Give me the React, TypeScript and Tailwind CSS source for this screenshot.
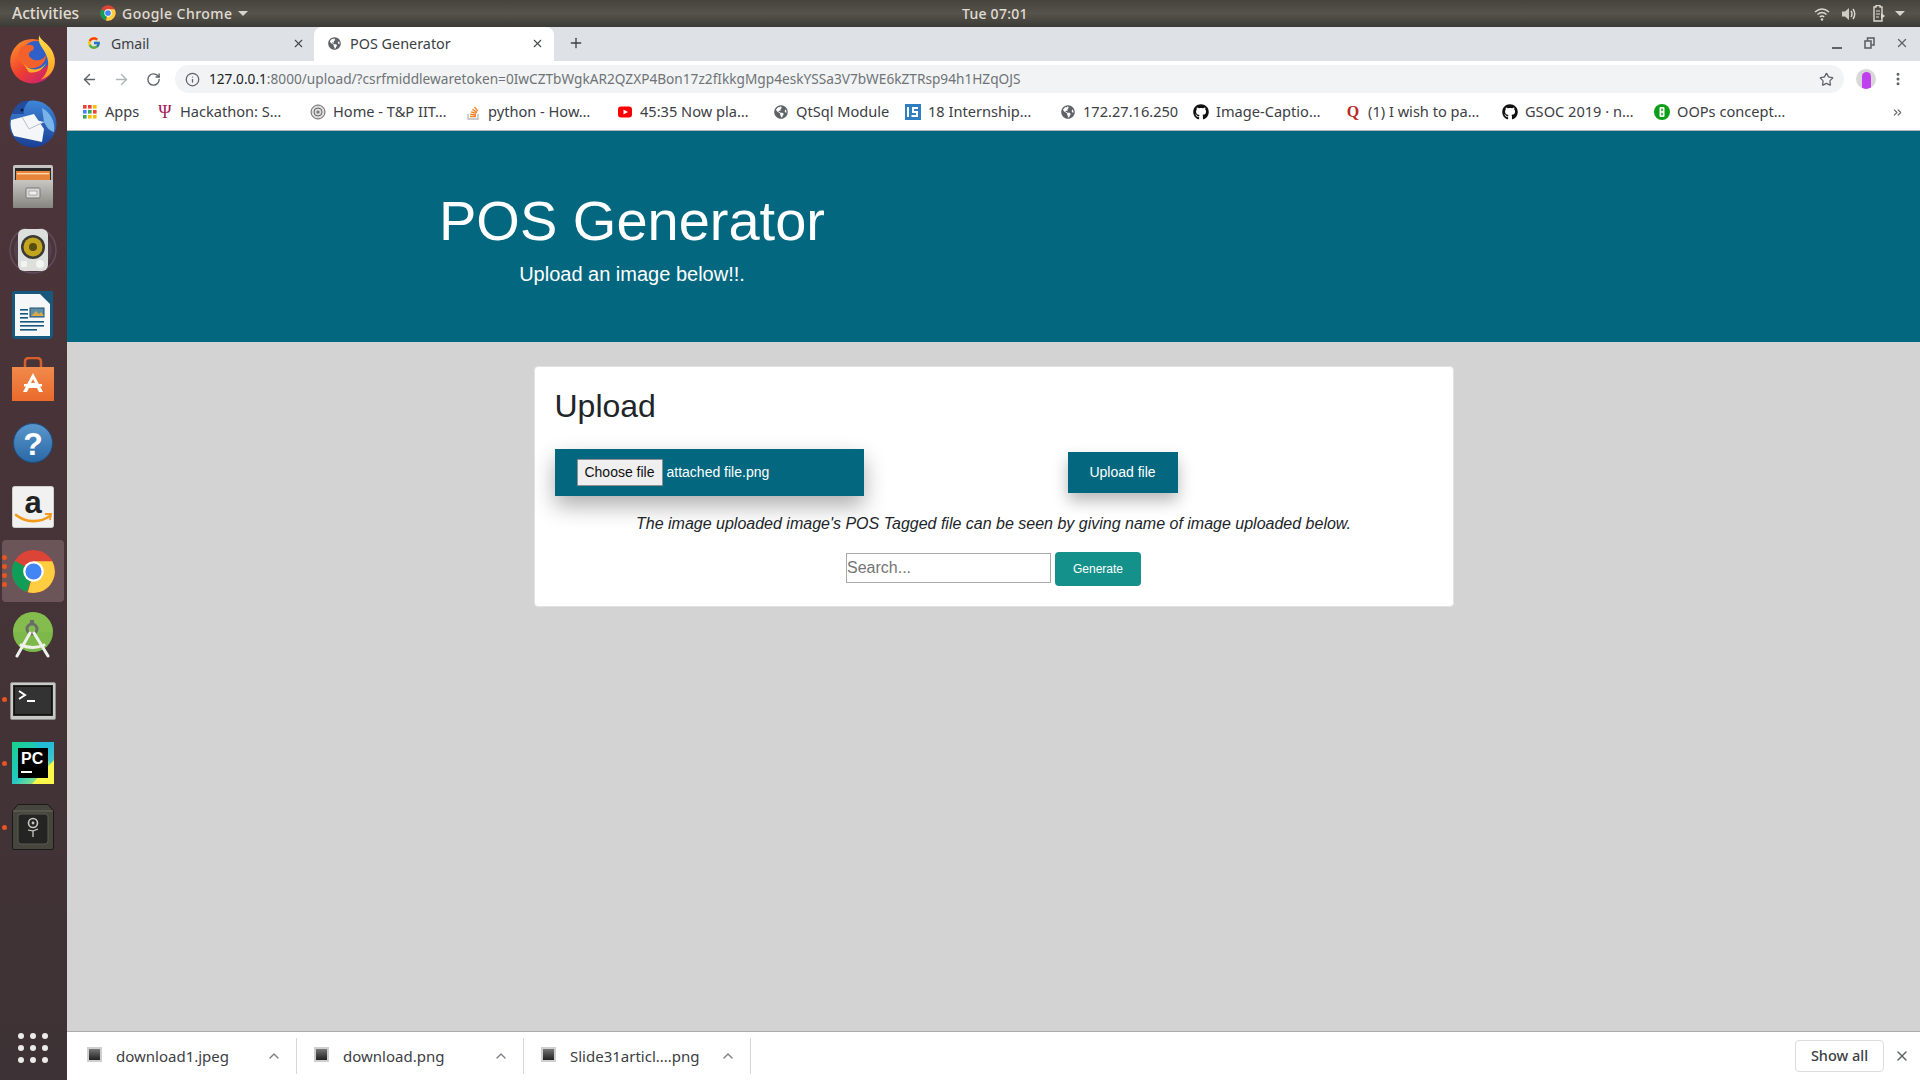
import React from "react";
import { ArrowLeft, ArrowRight, RotateCw, Info, Star, X, Plus, MoreVertical, ChevronUp, ChevronsRight } from "lucide-react";
import { FaGithub, FaGlobeAmericas } from "react-icons/fa";
import { FcGoogle } from "react-icons/fc";

const Globe = () => <FaGlobeAmericas className="w-[14px] h-[14px] text-[#5f6368]" />;
const Git = () => <FaGithub className="w-[16px] h-[16px] text-[#111]" />;

function ChromeLogo({ size }: { size: number }) {
  return (
    <svg width={size} height={size} viewBox="0 0 48 48">
      <circle cx="24" cy="24" r="23" fill="#db4437" />
      <path d="M24 24 L4.1 12.5 A23 23 0 0 0 17 46 Z" fill="#0f9d58" />
      <path d="M24 13 L44 13 A23 23 0 0 1 18 46.2 L24 24 Z" fill="#ffcd40" />
      <circle cx="24" cy="24" r="11" fill="#fff" />
      <circle cx="24" cy="24" r="8.6" fill="#4285f4" />
    </svg>
  );
}

const Firefox = () => (
  <svg width="50" height="50" viewBox="0 0 46 46">
    <defs>
      <linearGradient id="ffa" x1="0" y1="0" x2="0.8" y2="1"><stop offset="0" stopColor="#ff9a2a" /><stop offset="0.55" stopColor="#f0402e" /><stop offset="1" stopColor="#c91f72" /></linearGradient>
      <linearGradient id="ffb" x1="0" y1="0" x2="0" y2="1"><stop offset="0" stopColor="#ffe24a" /><stop offset="1" stopColor="#ff9a1f" /></linearGradient>
    </defs>
    <circle cx="22.5" cy="25" r="20.5" fill="url(#ffa)" />
    <circle cx="26" cy="20" r="13.5" fill="#2f5fc8" />
    <path d="M12 12 C20 8 26 10 23 15 C19 16 18 20 21 22 C25 26 33 24 35 19 C35 28 26 33 19 31 C11 29 7 20 12 12Z" fill="#f4602a" />
    <path d="M29 1 C29 7 41 9 43 23 C44 33 38 40 30 42 C37 36 39 27 35 19 C33 13 26 9 29 1Z" fill="url(#ffb)" />
    <path d="M14 27 C20 35 30 34 35 27 C32 33 26 37 19 35 Z" fill="#ffb02a" />
  </svg>
);

const Thunderbird = () => (
  <svg width="50" height="50" viewBox="0 0 50 50">
    <defs>
      <linearGradient id="tb" x1="0" y1="0" x2="0" y2="1"><stop offset="0" stopColor="#3f86d8" /><stop offset="1" stopColor="#1a3f93" /></linearGradient>
    </defs>
    <circle cx="25" cy="26" r="23.5" fill="url(#tb)" />
    <path d="M4 16 C7 6 15 2 21 3 C17 7 15 12 16 16 Z" fill="#234c9e" />
    <path d="M34 10 C42 14 48 24 46 34 C41 33 38 28 36 24Z" fill="#78b3ea" />
    <path d="M3 22 L26 16 L36 31 L34 44 L6 38 C3 33 2 27 3 22Z" fill="#f4f6f8" />
    <path d="M14 19 L21 31 L36 24" fill="#f4f6f8" stroke="#b7bfc9" strokeWidth="1" />
    <circle cx="14" cy="12" r="1.5" fill="#0d2040" />
  </svg>
);

const Files = () => (
  <svg width="42" height="44" viewBox="0 0 42 44">
    <defs>
      <linearGradient id="fl" x1="0" y1="0" x2="0" y2="1"><stop offset="0" stopColor="#c9c7c3" /><stop offset="1" stopColor="#87857f" /></linearGradient>
    </defs>
    <rect x="1" y="0" width="40" height="43" rx="2" fill="url(#fl)" />
    <rect x="3" y="3" width="36" height="12" fill="#2a2a2a" />
    <rect x="4" y="6" width="34" height="10" fill="#e8833a" />
    <rect x="5" y="8" width="32" height="1.4" fill="#fbd9a8" />
    <rect x="1" y="15" width="40" height="28" rx="1" fill="url(#fl)" />
    <rect x="14" y="23" width="14" height="10" rx="1" fill="#d9d8d5" stroke="#777" strokeWidth="1" />
    <rect x="17" y="26" width="8" height="4" fill="#efefef" stroke="#888" strokeWidth="0.6" />
  </svg>
);

const Rhythmbox = () => (
  <svg width="50" height="46" viewBox="0 0 50 46">
    <circle cx="25" cy="22" r="23" fill="none" stroke="#6b5a70" strokeWidth="1.4" opacity="0.7" />
    <circle cx="25" cy="22" r="19" fill="#5a4a5c" opacity="0.6" />
    <rect x="10" y="1" width="30" height="42" rx="6" fill="#dcdfdb" />
    <circle cx="25" cy="19" r="12" fill="#3b3a34" />
    <circle cx="25" cy="19" r="9.5" fill="#c1a51f" />
    <circle cx="25" cy="19" r="4" fill="#5a4d10" />
    <circle cx="32" cy="36" r="4" fill="#f4f4f2" />
    <rect x="13" y="33" width="6" height="6" rx="1" fill="#f2f2f0" />
  </svg>
);

const Writer = () => (
  <svg width="42" height="48" viewBox="0 0 42 48">
    <path d="M2 0 H29 L41 12 V44 Q41 48 37 48 H4 Q0 48 0 44 V2 Q0 0 2 0Z" fill="#17587f" />
    <path d="M3 3 H28 L38 13 V45 H3Z" fill="#f5f7f8" />
    <path d="M29 0 H41 V12 Z" fill="#17587f" />
    <rect x="18" y="17" width="14" height="9" fill="#5d8fa8" stroke="#244f6f" strokeWidth="1" />
    <path d="M19 25 L24 20 L27 23 L29 21 L32 25Z" fill="#d6a94a" />
    <g fill="#17587f"><rect x="8" y="18" width="8" height="1.6" /><rect x="8" y="22" width="8" height="1.6" /><rect x="8" y="26" width="8" height="1.6" /><rect x="8" y="30" width="24" height="1.6" /><rect x="8" y="34" width="24" height="1.6" /><rect x="8" y="38" width="17" height="1.6" /></g>
  </svg>
);

const Software = () => (
  <svg width="42" height="44" viewBox="0 0 42 44">
    <defs>
      <linearGradient id="sw" x1="0" y1="0" x2="0" y2="1"><stop offset="0" stopColor="#f08a4b" /><stop offset="1" stopColor="#ea6a2a" /></linearGradient>
    </defs>
    <path d="M13 12 V5 Q13 1 17 1 H25 Q29 1 29 5 V12" fill="none" stroke="#d85f2a" strokeWidth="2.5" />
    <path d="M0 10 H42 V44 H0Z" fill="url(#sw)" />
    <path d="M21 16 L31 35 H27 L25 31 H17 L15 35 H11Z M19 26 H23 L21 22Z" fill="#fff" fillRule="evenodd" />
    <rect x="12" y="27" width="18" height="2.5" fill="#fff" />
  </svg>
);

const Help = () => (
  <svg width="40" height="40" viewBox="0 0 40 40">
    <defs>
      <linearGradient id="hp" x1="0" y1="0" x2="0" y2="1"><stop offset="0" stopColor="#5a97cc" /><stop offset="1" stopColor="#2a68a6" /></linearGradient>
    </defs>
    <circle cx="20" cy="20" r="19.5" fill="url(#hp)" stroke="#1c4f86" strokeWidth="1" />
    <text x="20" y="32" textAnchor="middle" fontSize="32" fontWeight="700" fill="#fff" fontFamily="'Liberation Sans', sans-serif">?</text>
  </svg>
);

const Amazon = () => (
  <svg width="42" height="42" viewBox="0 0 42 42">
    <rect x="0.5" y="0.5" width="41" height="41" rx="2" fill="#f1f1f1" stroke="#cfcfcf" />
    <text x="21" y="27" textAnchor="middle" fontSize="31" fontWeight="700" fill="#222" fontFamily="'Liberation Sans', sans-serif">a</text>
    <path d="M4 29 C14 37 28 37 38 30" fill="none" stroke="#f49a1a" strokeWidth="2.6" strokeLinecap="round" />
    <path d="M33 28 L39 28 L38 34" fill="none" stroke="#f49a1a" strokeWidth="1.8" />
  </svg>
);

const AndroidStudio = () => (
  <svg width="42" height="46" viewBox="0 0 42 46">
    <circle cx="21" cy="20" r="20" fill="#7cb84a" />
    <path d="M1 20 A20 20 0 0 1 41 20 Z" fill="#8cc152" opacity="0.5" />
    <circle cx="20" cy="17" r="5" fill="none" stroke="#6b6b6b" strokeWidth="3" />
    <rect x="18" y="8" width="4" height="5" fill="#6b6b6b" />
    <path d="M18 21 L5 44 M22 21 L36 44 M9 33 Q21 38 32 33" fill="none" stroke="#eef0ea" strokeWidth="3" strokeLinecap="round" />
  </svg>
);

const Terminal = () => (
  <svg className="mt-[4px]" width="46" height="38" viewBox="0 0 46 38">
    <rect x="0.5" y="0.5" width="45" height="37" rx="1.5" fill="#c8c8c6" stroke="#8f8f8f" />
    <rect x="3" y="3" width="40" height="31" fill="#2a2a2a" />
    <rect x="4.5" y="4.5" width="37" height="28" fill="#333" stroke="#111" />
    <path d="M9 9 L15 13 L9 17" fill="none" stroke="#fff" strokeWidth="2" />
    <rect x="17" y="18" width="8" height="2" fill="#fff" />
  </svg>
);

const PyCharm = () => (
  <svg width="42" height="42" viewBox="0 0 42 42">
    <defs>
      <linearGradient id="pc" x1="0" y1="0" x2="1" y2="1"><stop offset="0" stopColor="#19d08f" /><stop offset="0.5" stopColor="#21c8c4" /><stop offset="1" stopColor="#fcf84a" /></linearGradient>
    </defs>
    <rect width="42" height="42" fill="url(#pc)" />
    <path d="M22 0 H42 V26 Z" fill="#25b6e8" opacity="0.6" />
    <path d="M42 18 V42 H20 Z" fill="#fcf84a" />
    <rect x="6" y="6" width="30" height="30" fill="#000" />
    <text x="9" y="22" fontSize="16" fontWeight="700" fill="#fff" fontFamily="'Liberation Sans', sans-serif">PC</text>
    <rect x="9" y="29" width="11" height="2" fill="#fff" />
  </svg>
);

const Vault = () => (
  <svg width="42" height="46" viewBox="0 0 42 46">
    <path d="M6 0.5 H36 L41.5 7 V44 Q41.5 45.5 40 45.5 H2 Q0.5 45.5 0.5 44 V7Z" fill="#46463f" stroke="#1a1a18" />
    <path d="M1 7 H41" stroke="#6a695f" strokeWidth="1" />
    <rect x="6" y="10" width="30" height="30" rx="3" fill="#242422" stroke="#5a5a53" />
    <circle cx="21" cy="19" r="4.5" fill="none" stroke="#c9c9c4" strokeWidth="1.6" />
    <circle cx="21" cy="19" r="1.4" fill="#c9c9c4" />
    <path d="M21 33 V27 L16 26 M21 27 L26 25" fill="none" stroke="#d5d5cf" strokeWidth="1.2" />
  </svg>
);

const dock = [
  { el: <Firefox />, dots: 0 },
  { el: <Thunderbird />, dots: 0 },
  { el: <Files />, dots: 0 },
  { el: <Rhythmbox />, dots: 0 },
  { el: <Writer />, dots: 0 },
  { el: <Software />, dots: 0 },
  { el: <Help />, dots: 0 },
  { el: <Amazon />, dots: 0 },
  { el: <ChromeLogo size={45} />, dots: 4 },
  { el: <AndroidStudio />, dots: 0 },
  { el: <Terminal />, dots: 1 },
  { el: <PyCharm />, dots: 1 },
  { el: <Vault />, dots: 1 },
];

const AppsIcon = () => (
  <svg width="14" height="14" viewBox="0 0 14 14">
    {[
      ["#ea4335", "#ea4335", "#fbbc05"],
      ["#4285f4", "#34a853", "#ea4335"],
      ["#34a853", "#fbbc05", "#fbbc05"],
    ].map((row, r) =>
      row.map((c, i) => <rect key={`${r}${i}`} x={i * 5} y={r * 5} width="3.6" height="3.6" fill={c} />)
    )}
  </svg>
);

const bookmarks: { w: string; icon: React.ReactNode; text: string }[] = [
  { w: "w-[75px]", icon: <AppsIcon />, text: "Apps" },
  { w: "w-[153px]", icon: <span className="text-[#a3195b] text-[18px] leading-none font-['Liberation_Serif',serif]">Ψ</span>, text: "Hackathon: S…" },
  { w: "w-[155px]", icon: <svg width="16" height="16" viewBox="0 0 16 16"><circle cx="8" cy="8" r="7" fill="#ddd" stroke="#666" /><circle cx="8" cy="8" r="4" fill="none" stroke="#666" /><circle cx="8" cy="8" r="1.6" fill="#777" /></svg>, text: "Home - T&P IIT…" },
  { w: "w-[152px]", icon: <svg width="16" height="16" viewBox="0 0 16 16"><path d="M3 10 V15 H13 V10" fill="none" stroke="#bcbbbb" strokeWidth="1.3" /><path d="M5 12.5 H11 M5.2 10.2 L11 11 M6 7.8 L11.3 9.4 M7.4 5.4 L12 8.4 M9.5 3 L12.8 7.2" stroke="#f48024" strokeWidth="1.3" fill="none" /></svg>, text: "python - How…" },
  { w: "w-[156px]", icon: <svg width="16" height="16" viewBox="0 0 16 16"><rect x="1" y="2.5" width="14" height="11" rx="3" fill="#f00" /><path d="M6.5 5.5 L11 8 L6.5 10.5Z" fill="#fff" /></svg>, text: "45:35 Now pla…" },
  { w: "w-[132px]", icon: <Globe />, text: "QtSql Module" },
  { w: "w-[155px]", icon: <svg width="16" height="16" viewBox="0 0 16 16"><rect width="16" height="16" fill="#2d7fc1" /><rect x="2" y="3" width="2" height="10" fill="#fff" /><path d="M13 4 H8 V8 H12 V12 H6.5" fill="none" stroke="#fff" strokeWidth="2" /></svg>, text: "18 Internship…" },
  { w: "w-[133px]", icon: <Globe />, text: "172.27.16.250" },
  { w: "w-[152px]", icon: <Git />, text: "Image-Captio…" },
  { w: "w-[157px]", icon: <span className="text-[#b92b27] text-[16px] leading-none font-bold font-['Liberation_Serif',serif]">Q</span>, text: "(1) I wish to pa…" },
  { w: "w-[152px]", icon: <Git />, text: "GSOC 2019 · n…" },
  { w: "w-[212px]", icon: <svg width="16" height="16" viewBox="0 0 16 16"><circle cx="8" cy="8" r="8" fill="#0d9e17" /><rect x="5.5" y="3" width="5" height="10" rx="1" fill="#fff" /><rect x="7.3" y="4.5" width="1.4" height="2.6" fill="#0d9e17" /><rect x="7.3" y="8.8" width="1.4" height="2.6" fill="#0d9e17" /></svg>, text: "OOPs concept…" },
];

const downloads = [
  { w: "w-[230px] pl-[20px]", name: "download1.jpeg" },
  { w: "w-[227px] pl-[17px]", name: "download.png" },
  { w: "w-[227px] pl-[17px]", name: "Slide31articl....png" },
];

export default function App() {
  return (
    <div className="w-[1920px] h-[1080px] overflow-hidden flex flex-col font-['Noto_Sans',sans-serif] bg-[#d3d3d3]">
      {/* GNOME bar */}
      <div className="h-[27px] shrink-0 flex items-center bg-gradient-to-b from-[#45433d] via-[#56534b] to-[#3b3a35] text-[#e0dcd3] text-[14px] font-medium">
        <div className="w-[962px] flex items-center pl-[12px]">
          <span className="w-[68px] text-[15.6px] whitespace-nowrap">Activities</span>
          <span className="ml-[20px] flex items-center"><ChromeLogo size={16} /></span>
          <span className="ml-[6px] tracking-[0.45px]">Google Chrome</span>
          <span className="ml-[6px] w-0 h-0 border-x-[5px] border-x-transparent border-t-[5px] border-t-[#d8d4cb]" />
        </div>
        <span className="tracking-[0.25px]">Tue 07:01</span>
        <div className="ml-auto flex items-center pr-[15px]">
          <svg width="16" height="16" viewBox="0 0 16 16" fill="none" stroke="#dcd8cf" strokeWidth="1.5"><path d="M1 6 Q8 0 15 6 M3.5 8.5 Q8 4.5 12.5 8.5 M5.8 11 Q8 9 10.2 11" /><circle cx="8" cy="13.5" r="1.2" fill="#dcd8cf" stroke="none" /></svg>
          <svg className="ml-[11px]" width="16" height="16" viewBox="0 0 16 16" fill="none"><path d="M1 5.5 H4 L8 2 V14 L4 10.5 H1Z" fill="#cfcbc2" /><path d="M10 5 Q12 8 10 11 M12 3 Q15.5 8 12 13" stroke="#dcd8cf" strokeWidth="1.4" /></svg>
          <svg className="ml-[14px]" width="14" height="17" viewBox="0 0 14 17"><path d="M3 2 H5 V0.5 H9 V2 H11 V16 H3Z" fill="none" stroke="#dcd8cf" strokeWidth="1.4" /><path d="M5 6 H9 M5 9 H9 M5 12 H8" stroke="#dcd8cf" strokeWidth="1.2" /><path d="M10 8 L14 11 L10 14Z" fill="#dcd8cf" /></svg>
          <span className="ml-[10px] w-0 h-0 border-x-[5px] border-x-transparent border-t-[5px] border-t-[#d8d4cb]" />
        </div>
      </div>

      <div className="flex flex-1 min-h-0">
        {/* Dock */}
        <div className="w-[67px] shrink-0 flex flex-col bg-gradient-to-b from-[#4e353a] to-[#3d3235]">
          {dock.map((d, i) => (
            <div key={i} className="relative h-[64px] flex items-center justify-center pr-[1px]">
              {d.dots === 4 && <div className="absolute left-[2px] right-[3px] top-[1px] bottom-[1px] rounded-[4px] bg-[#6b5559]" />}
              <div className="relative flex items-center justify-center">{d.el}</div>
              {d.dots > 0 && (
                <div className="absolute left-[2px] top-0 bottom-0 flex flex-col justify-center gap-[4px]">
                  {Array.from({ length: d.dots }).map((_, k) => (
                    <span key={k} className="block w-[5px] h-[5px] rounded-full bg-[#e95420]" />
                  ))}
                </div>
              )}
            </div>
          ))}
          <div className="mt-auto h-[47px] flex items-start justify-center pr-[1px]">
            <div className="grid grid-cols-3 gap-x-[6px] gap-y-[6px]">
              {Array.from({ length: 9 }).map((_, i) => (
                <span key={i} className="block w-[6px] h-[6px] rounded-full bg-[#ecebe9]" />
              ))}
            </div>
          </div>
        </div>

        {/* Chrome */}
        <div className="flex-1 min-w-0 flex flex-col">
          {/* Tabs */}
          <div className="h-[34px] shrink-0 flex items-center bg-[#dee1e6] text-[#3c4043] text-[14px]">
            <div className="w-[247px] h-full flex items-center pl-[20px] pr-[9px] pb-[2px]">
              <FcGoogle className="w-[14px] h-[14px]" />
              <span className="ml-[10px]">Gmail</span>
              <X className="ml-auto w-[13px] h-[13px] text-[#45484c]" strokeWidth={2} />
            </div>
            <div className="w-[240px] h-full flex items-center pl-[14px] pr-[10px] pb-[2px] bg-white rounded-t-[8px]">
              <FaGlobeAmericas className="w-[13px] h-[13px] text-[#5f6368]" />
              <span className="ml-[9px] mt-[1px] text-[14.4px]">POS Generator</span>
              <X className="ml-auto w-[13px] h-[13px] text-[#45484c]" strokeWidth={2} />
            </div>
            <div className="flex-1 h-full flex items-center pb-[2px]">
              <Plus className="ml-[14px] w-[16px] h-[16px] text-[#3c4043]" strokeWidth={2} />
              <div className="ml-auto flex items-center pr-[11px]">
                <span className="block w-[10px] h-[2px] bg-[#5f6368] mt-[9px]" />
                <svg className="ml-[22px]" width="11" height="12" viewBox="0 0 11 12" fill="none" stroke="#5f6368" strokeWidth="1.6"><rect x="3.5" y="1" width="6.5" height="7" /><rect x="1" y="4" width="6" height="7" fill="#dee1e6" /></svg>
                <X className="ml-[20px] w-[14px] h-[14px] text-[#5f6368]" strokeWidth={2.2} />
              </div>
            </div>
          </div>

          {/* Toolbar */}
          <div className="h-[38px] shrink-0 flex items-center bg-white pl-[6px] pr-[6px] pb-[2px]">
            <div className="w-[32px] flex justify-center"><ArrowLeft className="w-[17px] h-[17px] text-[#5f6368]" strokeWidth={2} /></div>
            <div className="w-[32px] flex justify-center"><ArrowRight className="w-[17px] h-[17px] text-[#b0b3b7]" strokeWidth={2} /></div>
            <div className="w-[32px] flex justify-center"><RotateCw className="w-[15px] h-[15px] text-[#5f6368]" strokeWidth={2.2} /></div>
            <div className="ml-[6px] flex-1 h-[28px] rounded-full bg-[#f1f3f4] flex items-center pl-[10px] pr-[10px]">
              <Info className="w-[15px] h-[15px] text-[#5f6368]" strokeWidth={2} />
              <span className="ml-[9px] text-[13.67px] text-[#6f7377] whitespace-nowrap"><span className="text-[#202124]">127.0.0.1</span>:8000/upload/?csrfmiddlewaretoken=0IwCZTbWgkAR2QZXP4Bon17z2fIkkgMgp4eskYSSa3V7bWE6kZTRsp94h1HZqOJS</span>
              <Star className="ml-auto w-[15px] h-[15px] text-[#5f6368]" strokeWidth={2} />
            </div>
            <div className="w-[32px] ml-[6px] flex justify-center">
              <span className="relative block w-[20px] h-[20px] rounded-full bg-[#d8d8d8] overflow-hidden">
                <span className="absolute left-[6px] top-[3px] w-[9px] h-[17px] rounded-t-[5px] rounded-b-[2px] bg-[#c040f0]" />
              </span>
            </div>
            <div className="w-[32px] flex justify-center"><MoreVertical className="w-[16px] h-[16px] text-[#5f6368]" strokeWidth={2.5} /></div>
          </div>

          {/* Bookmarks */}
          <div className="h-[32px] shrink-0 flex items-center bg-white border-b border-[#b4b6b8] pl-[15px] pb-[5px] text-[14.6px] text-[#3c4043]">
            {bookmarks.map((b, i) => (
              <div key={i} className={`${b.w} flex items-center whitespace-nowrap`}>
                <span className="w-[16px] h-[16px] flex items-center justify-center shrink-0">{b.icon}</span>
                <span className="ml-[7px]">{b.text}</span>
              </div>
            ))}
            <ChevronsRight className="ml-[25px] w-[13px] h-[13px] text-[#5f6368]" strokeWidth={2} />
          </div>

          {/* Page */}
          <div className="flex-1 min-h-0 flex flex-col bg-[#d3d3d3] font-['Liberation_Sans',Arial,sans-serif]">
            <div className="h-[211px] shrink-0 bg-[#03687f] text-white pt-[56px] pl-[372px]">
              <div className="w-fit text-center">
                <h1 className="text-[56px] leading-[67px] font-light">POS Generator</h1>
                <p className="mt-[5px] text-[20px] leading-[30px]">Upload an image below!!.</p>
              </div>
            </div>

            <div className="mx-auto mt-[24px] w-[920px] bg-white rounded-[4px] border border-[#e2e2e2] p-[20px] text-[#212529]">
              <h2 className="text-[32px] leading-[38px] font-normal">Upload</h2>
              <div className="mt-[24px] flex items-center">
                <div className="w-[309px] h-[47px] bg-[#03687f] flex items-center pl-[22px] text-white text-[14px] shadow-[0_10px_22px_rgba(0,0,0,0.32)]">
                  <span className="h-[27px] w-[86px] flex items-center justify-center bg-[#efefef] border border-[#8f8f8f] text-[#111] rounded-[1px]">Choose file</span>
                  <span className="ml-[4px]">attached file.png</span>
                </div>
                <button className="ml-[204px] w-[110px] h-[41px] bg-[#03687f] text-white text-[14px] shadow-[0_8px_16px_rgba(0,0,0,0.28)]">Upload file</button>
              </div>
              <p className="mt-[16px] text-center italic text-[16px] leading-[24px]">The image uploaded image's POS Tagged file can be seen by giving name of image uploaded below.</p>
              <div className="mt-[16px] flex items-center justify-center">
                <input readOnly placeholder="Search..." className="w-[205px] h-[30px] mb-[2px] border border-[#a9a9a9] bg-white text-[16px] px-0 placeholder:text-[#757575] outline-none" />
                <button className="ml-[4px] w-[86px] h-[34px] rounded-[4px] bg-[#15918b] text-white text-[12px]">Generate</button>
              </div>
            </div>

            {/* Download shelf */}
            <div className="mt-auto h-[49px] shrink-0 bg-white border-t border-[#a9abad] flex items-center text-[15px] text-[#3c4043] font-['Noto_Sans',sans-serif]">
              {downloads.map((d, i) => (
                <div key={i} className={`${d.w} h-[36px] pr-[14px] flex items-center border-r border-[#d4d6d8]`}>
                  <span className="block w-[15px] h-[15px] -mt-[3px] border-[2px] border-[#cfcfcf] bg-gradient-to-b from-[#777] to-[#222]" />
                  <span className="ml-[14px] whitespace-nowrap">{d.name}</span>
                  <ChevronUp className="ml-auto w-[16px] h-[16px] text-[#7b7e82]" strokeWidth={2} />
                </div>
              ))}
              <div className="ml-auto flex items-center pr-[10px]">
                <span className="w-[89px] h-[32px] flex items-center justify-center rounded-[4px] border border-[#dadce0] font-medium text-[14.5px] text-[#3c4043]">Show all</span>
                <X className="ml-[10px] w-[16px] h-[16px] text-[#5f6368]" strokeWidth={2.2} />
              </div>
            </div>
          </div>
        </div>
      </div>
    </div>
  );
}
